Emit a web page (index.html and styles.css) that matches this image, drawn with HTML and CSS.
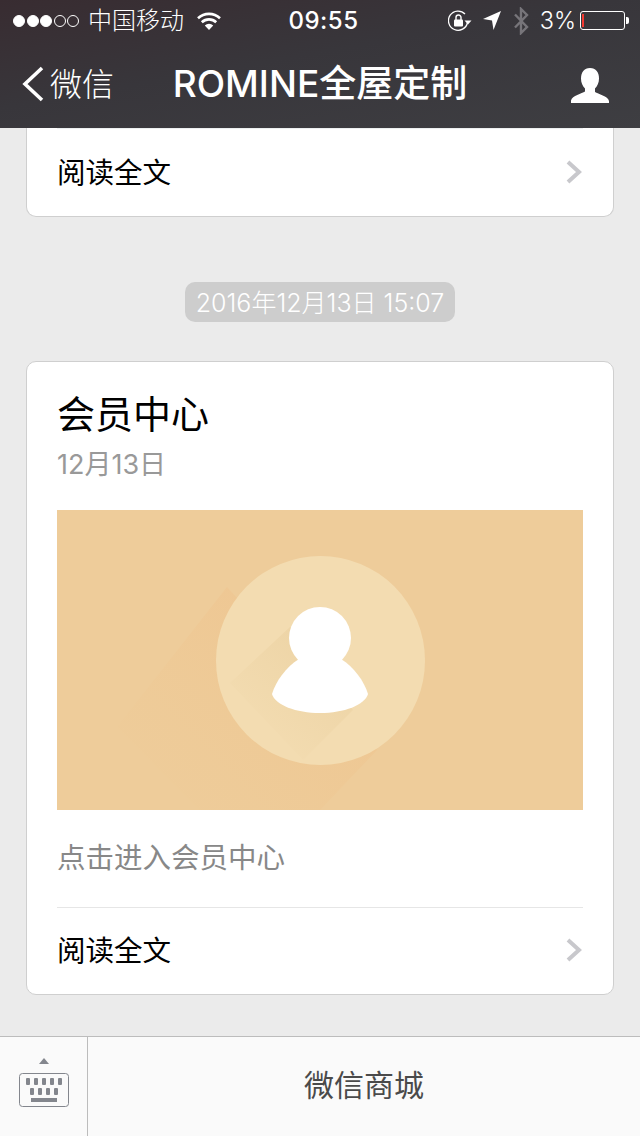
FILE: index.html
```html
<!DOCTYPE html>
<html lang="zh-CN">
<head>
  <meta charset="UTF-8">
  <title>ROMINE全屋定制</title>
  <link rel="stylesheet" href="styles.css">
</head>
<body>

<header class="top">
  <div class="status">
    <div class="status-left">
      <span class="signal"><i class="on"></i><i class="on"></i><i class="on"></i><i></i><i></i></span>
      <span class="carrier">中国移动</span>
      <svg class="wifi" width="24" height="18" viewBox="0 0 24 18">
        <path d="M12 18 7.800 13.500a6 6 0 0 1 8.400 0Z" fill="#fff"/>
        <path d="M4.800 10.300a10.400 10.400 0 0 1 14.400 0" fill="none" stroke="#fff" stroke-width="2.600"/>
        <path d="M1 6.300a16 16 0 0 1 22 0" fill="none" stroke="#fff" stroke-width="2.600"/>
      </svg>
    </div>
    <div class="time">09:55</div>
    <div class="status-right">
      <svg class="lock" width="24" height="22" viewBox="0 0 24 22">
        <path d="M19.500 12.500A9.600 9.600 0 1 1 17 4" fill="none" stroke="#fff" stroke-width="1.300"/>
        <path d="M16.500 10.500h7l-3.500 4Z" fill="#fff"/>
        <rect x="6" y="9.500" width="9" height="7" rx="1" fill="#fff"/>
        <path d="M8 10V7.500a2.500 2.500 0 0 1 5 0V10" fill="none" stroke="#fff" stroke-width="1.400"/>
      </svg>
      <svg class="arrow" width="18" height="19" viewBox="0 0 18 19"><path d="M18 0 10.500 19 9 9.500 0 8Z" fill="#fff"/></svg>
      <svg class="bt" width="16" height="28" viewBox="0 0 16 28"><path d="M2 7.500 14 20 8 26V2l6 6L2 20.500" fill="none" stroke="#77757a" stroke-width="2.400"/></svg>
      <span class="percent">3%</span>
      <span class="battery"><span class="battery-level"></span></span>
    </div>
  </div>
  <nav class="nav">
    <div class="back">
      <svg width="24" height="36" viewBox="0 0 24 36"><path d="M21 2 4 18l17 16" fill="none" stroke="#fff" stroke-width="3.600"/></svg>
      <span>微信</span>
    </div>
    <h1 class="nav-title">ROMINE全屋定制</h1>
    <svg class="nav-user" width="38" height="36" viewBox="0 0 38 36">
      <path d="M19 0c6 0 9 4.500 9 10.500 0 4-1.500 7.500-4 10v3.500c3 2 13 4 14 9V35H0v-2.500c1-5 11-7 14-9V20.500c-2.500-2.500-4-6-4-10C10 4.500 13 0 19 0Z" fill="#fff"/>
    </svg>
  </nav>
</header>

<main class="feed">
  <section class="card card-cut">
    <div class="read-more">
      <span>阅读全文</span>
      <svg class="chevron" width="18" height="26" viewBox="0 0 18 26"><path d="M3 3l11 10L3 23" fill="none" stroke="#c8c8cc" stroke-width="4"/></svg>
    </div>
  </section>

  <div class="stamp"><span>2016年12月13日 15:07</span></div>

  <section class="card">
    <div class="card-body">
      <h2 class="card-title">会员中心</h2>
      <p class="card-date">12月13日</p>
      <svg class="banner" width="526" height="300" viewBox="0 0 526 300">
        <defs>
          <linearGradient id="longShadow" gradientUnits="userSpaceOnUse" x1="240" y1="150" x2="90" y2="300">
            <stop offset="0" stop-color="#efc28c" stop-opacity=".42"/>
            <stop offset="1" stop-color="#efc78f" stop-opacity="0"/>
          </linearGradient>
          <linearGradient id="innerShadow" gradientUnits="userSpaceOnUse" x1="265" y1="150" x2="195" y2="225">
            <stop offset="0" stop-color="#eed5a7"/>
            <stop offset="1" stop-color="#f3dcb1"/>
          </linearGradient>
        </defs>
        <rect width="526" height="300" fill="#eecc9a"/>
        <path d="M170 77 60 217 143 300H263L320 240Z" fill="url(#longShadow)"/>
        <circle cx="263.500" cy="150.500" r="104.500" fill="#f3dcb1"/>
        <path d="M233 117 173 173 246 250 296 200Z" fill="url(#innerShadow)"/>
        <circle cx="263" cy="128" r="31" fill="#fff"/>
        <path d="M242 149c-13 8-23 22-27 35 3 11 24 19 48 19s45-8 48-19c-4-13-14-27-27-35Z" fill="#fff"/>
      </svg>
      <p class="card-desc">点击进入会员中心</p>
    </div>
    <div class="read-more with-line">
      <span>阅读全文</span>
      <svg class="chevron" width="18" height="26" viewBox="0 0 18 26"><path d="M3 3l11 10L3 23" fill="none" stroke="#c8c8cc" stroke-width="4"/></svg>
    </div>
  </section>
</main>

<footer class="bottom">
  <div class="keyboard">
    <svg width="50" height="50" viewBox="0 0 50 50">
      <path d="M25 0l5 6H20Z" fill="#83868d"/>
      <rect x="0.500" y="15.500" width="49" height="33" rx="3" fill="none" stroke="#83868d"/>
      <g fill="#83868d">
        <rect x="7" y="20" width="4" height="7" rx="1"/><rect x="15" y="20" width="4" height="7" rx="1"/><rect x="23" y="20" width="4" height="7" rx="1"/><rect x="31" y="20" width="4" height="7" rx="1"/><rect x="39" y="20" width="4" height="7" rx="1"/>
        <rect x="11" y="30" width="4" height="7" rx="1"/><rect x="19" y="30" width="4" height="7" rx="1"/><rect x="27" y="30" width="4" height="7" rx="1"/><rect x="35" y="30" width="4" height="7" rx="1"/>
        <rect x="12" y="40" width="26" height="4"/>
      </g>
    </svg>
  </div>
  <div class="menu-item">微信商城</div>
</footer>

</body>
</html>
```

FILE: styles.css
```css
* { box-sizing: border-box; margin: 0; padding: 0; }

html, body {
  width: 640px;
  height: 1136px;
  overflow: hidden;
}

body {
  display: flex;
  flex-direction: column;
  background: #ebebeb;
  font-family: "Inter", "Noto Sans CJK SC", sans-serif;
  color: #000;
}

/* top bar */
.top {
  flex: 0 0 128px;
  background: linear-gradient(170deg, #382c31 0%, #38363b 45%, #3e3e42 100%);
  color: #fff;
}

.status {
  height: 40px;
  display: flex;
  align-items: center;
  justify-content: space-between;
  padding: 1px 15px 0 13px;
  position: relative;
}

.status-left, .status-right {
  display: flex;
  align-items: center;
}

.signal {
  display: flex;
  gap: 1.500px;
}

.signal i {
  width: 12px;
  height: 12px;
  border-radius: 50%;
  border: 1px solid #fff;
}

.signal i.on { background: #fff; }

.carrier {
  margin-left: 9px;
  font-size: 24px;
  font-weight: 300;
  line-height: 40px;
}

.wifi { margin-left: 13px; }

.time {
  position: absolute;
  left: 7px;
  right: 0;
  text-align: center;
  font-size: 24px;
  font-weight: 500;
  letter-spacing: 0.500px;
  line-height: 40px;
}

.lock { margin-right: 11px; }
.arrow { margin-right: 12px; }
.bt { margin-right: 11px; }

.percent {
  font-size: 23.500px;
  font-weight: 300;
  margin-right: 4px;
}

.battery {
  width: 45px;
  height: 19px;
  border: 1px solid #fff;
  border-radius: 3px;
  padding: 2px 1px;
  position: relative;
  display: block;
}

.battery::after {
  content: "";
  position: absolute;
  right: -5px;
  top: 5px;
  width: 3px;
  height: 7px;
  background: #fff;
  border-radius: 0 2px 2px 0;
}

.battery-level {
  display: block;
  width: 2px;
  height: 13px;
  background: #f43a32;
}

.nav {
  height: 88px;
  display: flex;
  align-items: center;
  justify-content: space-between;
  padding: 0 31px 0 21px;
  position: relative;
}

.back {
  display: flex;
  align-items: center;
  gap: 5px;
  font-size: 32px;
  font-weight: 300;
  line-height: 42px;
}

.back span { margin-top: 2px; }

.nav-title {
  position: absolute;
  left: 0;
  right: 0;
  text-align: center;
  font-size: 37px;
  font-weight: 500;
  line-height: 92px;
}

.nav-user { margin-top: 4px; }

/* messages */
.feed {
  flex: 1;
  overflow: hidden;
  padding: 0 26px;
}

.card {
  background: #fff;
  border: 1px solid #cfcfcf;
  border-radius: 10px;
}

.card-cut {
  height: 89px;
  border-top: 0;
  border-radius: 0 0 10px 10px;
}

.card-cut .read-more {
  height: 88px;
  padding-bottom: 4px;
  border-top: 1px solid #eceff0;
}

.card-cut .chevron { margin-top: 2px; }

.stamp {
  display: flex;
  justify-content: center;
  margin: 65px 0 39px;
}

.stamp span {
  height: 40px;
  width: 270px;
  background: #cdcdcd;
  border-radius: 10px;
  color: #fff;
  font-size: 25px;
  font-weight: 300;
  line-height: 42px;
  text-align: center;
}

.card-body {
  padding: 28px 30px 0;
}

.card-title {
  font-size: 38px;
  font-weight: 400;
  line-height: 48px;
}

.card-date {
  margin-top: 8px;
  font-size: 27px;
  font-weight: 400;
  color: #999;
  line-height: 38px;
}

.banner {
  display: block;
  margin-top: 26px;
}

.card-desc {
  height: 97px;
  font-size: 28.500px;
  font-weight: 400;
  color: #888;
  line-height: 96px;
}

.read-more {
  height: 87px;
  margin: 0 30px;
  padding-bottom: 6px;
  display: flex;
  align-items: center;
  justify-content: space-between;
  font-size: 28.500px;
  font-weight: 400;
}

.chevron { margin-top: 4px; }

.with-line { border-top: 1px solid #e6e6e6; }

/* bottom menu */
.bottom {
  flex: 0 0 100px;
  display: flex;
  background: #fafafa;
  border-top: 1px solid #bcbcbc;
}

.keyboard {
  flex: 0 0 88px;
  display: flex;
  align-items: center;
  justify-content: center;
  border-right: 1px solid #bcbcbc;
  padding-bottom: 8px;
}

.menu-item {
  flex: 1;
  text-align: center;
  font-size: 30px;
  font-weight: 400;
  color: #4a4a4a;
  line-height: 96px;
}
```
